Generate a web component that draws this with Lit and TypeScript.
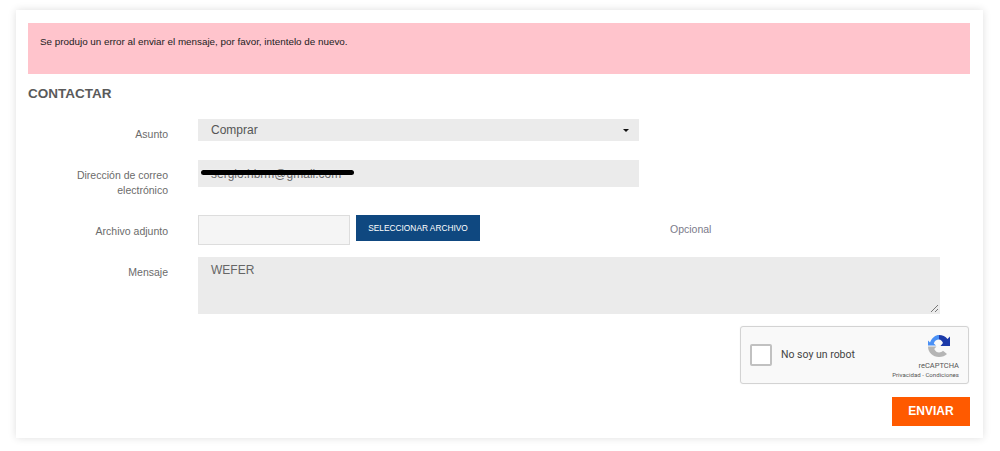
import { LitElement, html, css } from "lit";
import { customElement } from "lit/decorators.js";

@customElement("app-root")
export class AppRoot extends LitElement {
  static styles = css`
    :host { display: block; height: 451px; background: #fff; font-family: "Liberation Sans", Arial, sans-serif; overflow: hidden; }
    * { box-sizing: border-box; }
    .page { padding: 10px 17px 0 16px; }
    .card { height: 428px; padding: 13px 13px 0 12px; background: #fff; box-shadow: 0 0 8px rgba(0,0,0,.13); }
    .alert { height: 51px; background: #ffc4cc; color: #222; font-size: 9.85px; line-height: 12px; padding: 13px 12px; }
    h1 { margin: 12px 0 0; font-size: 13.5px; line-height: 16px; font-weight: 700; color: #5a5a5a; height: 16px; }
    .row { display: grid; grid-template-columns: 140px 1fr; column-gap: 30px; font-size: 10.5px; color: #6b6b6b; }
    .row label { text-align: right; line-height: 16px; }
    .r1 { margin-top: 17px; height: 22px; }
    .r1 label { padding-top: 7px; }
    .r2 { margin-top: 19px; height: 38px; }
    .r2 label { padding-top: 8px; line-height: 15px; }
    .r3 { margin-top: 17px; height: 30px; }
    .r3 label { padding-top: 8px; }
    .r4 { margin-top: 12px; height: 57px; }
    .r4 label { padding-top: 7px; }
    .select { width: 441px; height: 22px; background: #ebebeb; display: flex; align-items: center; justify-content: space-between; padding: 0 10px 0 13px; font-size: 12px; color: #555; }
    .caret { width: 0; height: 0; border-left: 3.5px solid transparent; border-right: 3.5px solid transparent; border-top: 3.5px solid #111; }
    .email { position: relative; width: 441px; height: 27px; background: #ebebeb; padding: 7px 13px; font-size: 12px; line-height: 14px; color: #666; }
    .scribble { position: absolute; left: 3px; top: 10px; width: 153px; height: 5px; background: #000; border-radius: 3px; box-shadow: 0 0 1px #fff; }
    .files { display: flex; align-items: flex-start; }
    .file { width: 152px; height: 30px; background: #f5f5f5; border: 1px solid #ddd; }
    .btn { margin-left: 6px; width: 124px; height: 26px; background: #0f4880; color: #fff; font-size: 8.35px; text-align: center; line-height: 26px; }
    .opt { margin-left: 190px; margin-top: 7px; line-height: 14px; color: #7b7b8a; font-size: 10.5px; }
    .ta { position: relative; width: 742px; height: 57px; background: #ebebeb; padding: 6px 13px; font-size: 12px; line-height: 14px; color: #666; }
    .grip { position: absolute; right: 1px; bottom: 1px; }
    .cap-wrap { display: flex; justify-content: flex-end; margin-top: 12px; padding-right: 1px; }
    .cap { width: 229px; height: 58px; background: #f9f9f9; border: 1px solid #d3d3d3; border-radius: 3px; display: flex; align-items: center; padding-left: 9px; box-shadow: 0 0 2px rgba(0,0,0,.06); }
    .box { width: 22px; height: 22px; background: #fff; border: 2px solid #c1c1c1; border-radius: 2px; }
    .cap-text { margin-left: 9px; margin-top: -2px; font-family: Roboto, sans-serif; font-size: 10.5px; color: #444; flex: 1; }
    .brand { width: 78px; margin-right: 9px; margin-top: 3px; display: flex; flex-direction: column; align-items: flex-end; }
    .logo { margin-right: 8px; display: block; }
    .rc { font-family: Roboto, sans-serif; font-size: 7.5px; line-height: 9px; color: #555; margin-top: 3px; }
    .links { font-family: Roboto, sans-serif; font-size: 6.1px; line-height: 9px; color: #555; white-space: nowrap; }
    .send-wrap { display: flex; justify-content: flex-end; margin-top: 13px; }
    .send { width: 78px; height: 29px; background: #ff5a00; color: #fff; font-size: 12px; font-weight: 700; text-align: center; line-height: 29px; }
  `;

  render() {
    return html`
      <div class="page">
        <div class="card">
          <div class="alert">Se produjo un error al enviar el mensaje, por favor, intentelo de nuevo.</div>
          <h1>CONTACTAR</h1>
          <div class="row r1">
            <label>Asunto</label>
            <div class="select"><span>Comprar</span><span class="caret"></span></div>
          </div>
          <div class="row r2">
            <label>Dirección de correo electrónico</label>
            <div class="email">sergio.hbrm@gmail.com<span class="scribble"></span></div>
          </div>
          <div class="row r3">
            <label>Archivo adjunto</label>
            <div class="files">
              <div class="file"></div>
              <div class="btn">SELECCIONAR ARCHIVO</div>
              <div class="opt">Opcional</div>
            </div>
          </div>
          <div class="row r4">
            <label>Mensaje</label>
            <div class="ta">WEFER
              <svg class="grip" width="9" height="9" viewBox="0 0 9 9"><path d="M1 8 8 1M5 8 8 5" stroke="#777" stroke-width="1" fill="none"/></svg>
            </div>
          </div>
          <div class="cap-wrap">
            <div class="cap">
              <div class="box"></div>
              <div class="cap-text">No soy un robot</div>
              <div class="brand">
                <svg class="logo" width="24" height="24" viewBox="0 0 24 24">
                  <path d="M1 11.500V6.500L3 8.500C5 3.500 8.500 1 12 1V5.500C9.500 5.500 7.500 7 6.800 9.500L9 11.500Z" fill="#4a90f5"/>
                  <path d="M12 1C15.500 1 18.500 2.500 20.500 5L23 2.500V12H13.500L16 9C15 7 13.800 5.500 12 5.500Z" fill="#1c3aa9"/>
                  <path d="M1 12.500H9.500L7.200 15C8.500 17.500 10 18.500 12 18.500C13.500 18.500 15 18 16 16.800L20 20C18 22 15.500 23 12 23C6 23 1 18.500 1 12.500Z" fill="#b5b5b5"/>
                </svg>
                <div class="rc">reCAPTCHA</div>
                <div class="links">Privacidad - Condiciones</div>
              </div>
            </div>
          </div>
          <div class="send-wrap"><div class="send">ENVIAR</div></div>
        </div>
      </div>
    `;
  }
}
